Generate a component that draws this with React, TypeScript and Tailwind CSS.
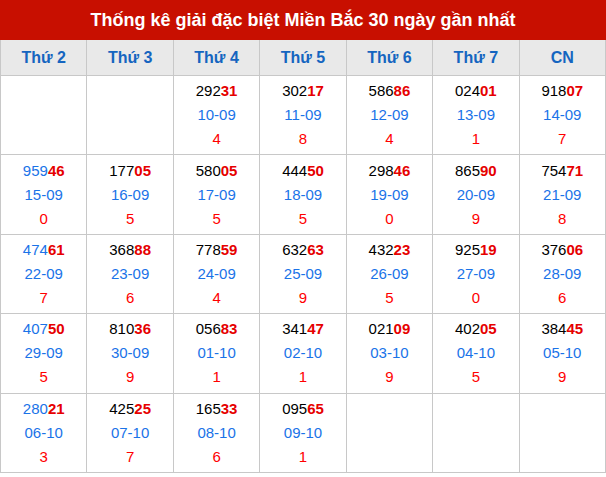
const days = ['Thứ 2', 'Thứ 3', 'Thứ 4', 'Thứ 5', 'Thứ 6', 'Thứ 7', 'CN']

type Cell = { num: string; date: string; tail: string } | null

const rows: Cell[][] = [
  [null, null,
    { num: '29231', date: '10-09', tail: '4' },
    { num: '30217', date: '11-09', tail: '8' },
    { num: '58686', date: '12-09', tail: '4' },
    { num: '02401', date: '13-09', tail: '1' },
    { num: '91807', date: '14-09', tail: '7' }],
  [{ num: '95946', date: '15-09', tail: '0' },
    { num: '17705', date: '16-09', tail: '5' },
    { num: '58005', date: '17-09', tail: '5' },
    { num: '44450', date: '18-09', tail: '5' },
    { num: '29846', date: '19-09', tail: '0' },
    { num: '86590', date: '20-09', tail: '9' },
    { num: '75471', date: '21-09', tail: '8' }],
  [{ num: '47461', date: '22-09', tail: '7' },
    { num: '36888', date: '23-09', tail: '6' },
    { num: '77859', date: '24-09', tail: '4' },
    { num: '63263', date: '25-09', tail: '9' },
    { num: '43223', date: '26-09', tail: '5' },
    { num: '92519', date: '27-09', tail: '0' },
    { num: '37606', date: '28-09', tail: '6' }],
  [{ num: '40750', date: '29-09', tail: '5' },
    { num: '81036', date: '30-09', tail: '9' },
    { num: '05683', date: '01-10', tail: '1' },
    { num: '34147', date: '02-10', tail: '1' },
    { num: '02109', date: '03-10', tail: '9' },
    { num: '40205', date: '04-10', tail: '5' },
    { num: '38445', date: '05-10', tail: '9' }],
  [{ num: '28021', date: '06-10', tail: '3' },
    { num: '42525', date: '07-10', tail: '7' },
    { num: '16533', date: '08-10', tail: '6' },
    { num: '09565', date: '09-10', tail: '1' },
    null, null, null],
]

export default function App() {
  return (
    <div className="w-[606px] h-[477px] bg-white font-['Liberation_Sans',Arial,sans-serif]">
      <div className="h-10 bg-[#c80f00] flex items-center justify-center text-white font-bold text-[18px]">
        Thống kê giải đặc biệt Miền Bắc 30 ngày gần nhất
      </div>

      <div className="grid grid-cols-7 border-l border-[#c8c8c8]">
        {days.map(d => (
          <div
            key={d}
            className="h-9 bg-[#e9e9e9] border-r border-b border-[#c8c8c8] flex items-center justify-center text-[#1565c0] font-bold text-[16px]"
          >
            {d}
          </div>
        ))}

        {rows.map((row, ri) =>
          row.map((c, ci) => (
            <div
              key={ri + '-' + ci}
              className="h-[79.4px] border-r border-b border-[#c8c8c8] flex flex-col items-center justify-center text-[15px] leading-6"
            >
              {c && (
                <>
                  <div>
                    <span className={ci === 0 ? 'text-[#1a73e8]' : 'text-black'}>{c.num.slice(0, 3)}</span>
                    <span className="text-[#e60000] font-bold">{c.num.slice(3)}</span>
                  </div>
                  <div className="text-[#1a73e8]">{c.date}</div>
                  <div className="text-[#ff0000]">{c.tail}</div>
                </>
              )}
            </div>
          ))
        )}
      </div>
    </div>
  )
}
